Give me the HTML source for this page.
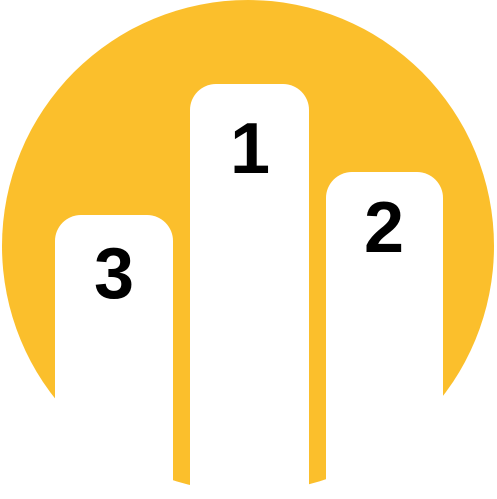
<!DOCTYPE html>
<html><head><style>
html,body{margin:0;padding:0;background:#fff;width:497px;height:499px;overflow:hidden;position:relative}
.c{position:absolute;left:2px;top:0;width:492px;height:492px;border-radius:50%;background:#FBBF2C}
.b{position:absolute;background:#fff;border-radius:26px 26px 0 0;bottom:0}
.n{position:absolute;font-family:"Liberation Sans",sans-serif;font-weight:bold;font-size:72px;line-height:1;color:#000;text-align:center;width:60px}
</style></head><body>
<div class="c"></div>
<div class="b" style="left:55px;width:118px;top:215px"></div>
<div class="b" style="left:190px;width:119px;top:84px"></div>
<div class="b" style="left:326px;width:117px;top:172px"></div>
<div class="n" style="left:84px;top:238px">3</div>
<div class="n" style="left:220px;top:113px">1</div>
<div class="n" style="left:354px;top:192px">2</div>
</body></html>
